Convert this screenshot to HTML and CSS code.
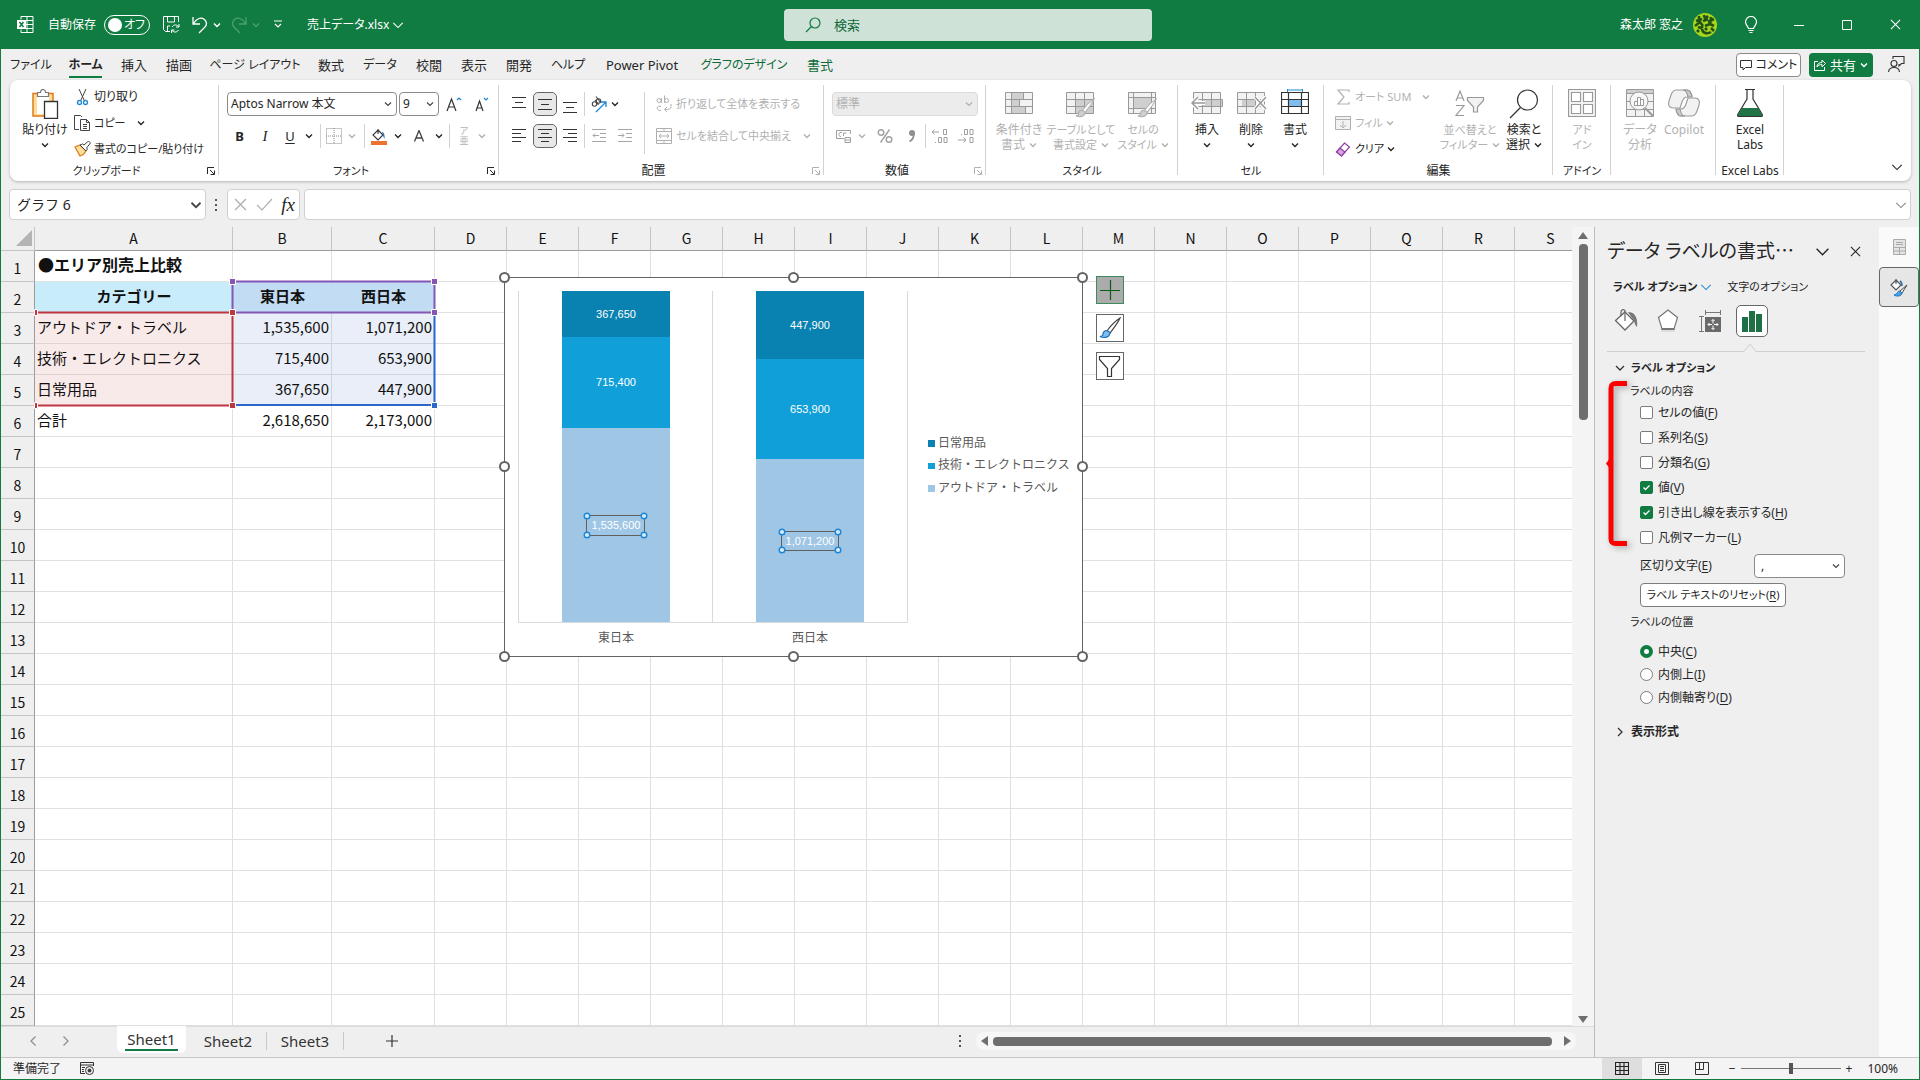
FILE: index.html
```html
<!DOCTYPE html>
<html lang="ja">
<head>
<meta charset="utf-8">
<title>売上データ.xlsx</title>
<link rel="stylesheet" href="styles.css">
</head>
<body>
<svg class="defs" aria-hidden="true">
  <symbol id="chev" viewBox="0 0 8 8"><path d="M1 2.500l3 3 3-3" fill="none" stroke="currentColor" stroke-width="1.400"/></symbol>
  <symbol id="chev-lg" viewBox="0 0 14 14"><path d="M1.500 4.500l5.500 5.500 5.500-5.500" fill="none" stroke="currentColor" stroke-width="1.300"/></symbol>
  <symbol id="cross" viewBox="0 0 12 12"><path d="M1 1l10 10M11 1L1 11" fill="none" stroke="currentColor" stroke-width="1.200"/></symbol>
  <symbol id="launch" viewBox="0 0 8 8"><path d="M.5 7V.5H7M3 3l4 4M7.500 3.500v4h-4" fill="none" stroke="currentColor"/></symbol>
  <symbol id="brush" viewBox="0 0 24 24"><path d="M22 2C16 6 11 12 9 15l3 2C15 13 20 7 22 2z" fill="#fff" stroke="currentColor" stroke-width="1.200"/><path d="M9 14.500c-3 0-4 2-4 4 0 1-1.500 2-3 2 4 2 10 1 10-4z" fill="var(--tip,#cfcfcf)" stroke="var(--tipline,currentColor)" stroke-width="1.200"/></symbol>
</svg>

<header class="titlebar">
  <div class="quick">
    <svg class="applogo" width="17" height="17" viewBox="0 0 17 17" fill="none" stroke="#fff"><path d="M4 3.500V.5h12v16H4v-3M10 .5v16M4.500 4.500H16M9 8.500h7M4.500 12.500H16"/><path d="M0 4h9v9H0z" fill="#fff" stroke="none"/><path d="M2.500 6l4 5M6.500 6l-4 5" stroke="#107c41" stroke-width="1.500"/></svg>
    <label class="autosave" for="autosave">自動保存</label>
    <button class="toggle" id="autosave" type="button"><span class="knob"></span>オフ</button>
    <button class="plain q-save" type="button" aria-label="保存"><svg width="17" height="17" viewBox="0 0 17 17" fill="none" stroke="#fff"><path d="M7 15.500H2.500l-2-2V.5h15V6M4.500.5V6h7V.5M4.500 15v-5H7M16 8v3h-3M8.500 17v-3h3M9 11c2-3 5-2.500 7 0M15.500 14c-2 3-5 2.500-7 0"/></svg></button>
    <button class="plain q-undo" type="button" aria-label="元に戻す"><svg width="16" height="18" viewBox="0 0 16 18" fill="none" stroke="#fff" stroke-width="1.300"><path d="M1 1v7h7M1.500 7.500C5 2 9 1 12.500 3.500c3 3 2 6 0 8L7 17"/></svg><svg class="chev"><use href="#chev"/></svg></button>
    <button class="plain q-redo" type="button" aria-label="やり直し" disabled><svg width="16" height="18" viewBox="0 0 16 18" fill="none" stroke="currentColor" stroke-width="1.300"><path d="M15 1v7H8M14.500 7.500C11 2 7 1 3.500 3.500c-3 3-2 6 0 8L9 17"/></svg><svg class="chev"><use href="#chev"/></svg></button>
    <button class="plain q-custom" type="button" aria-label="カスタマイズ"><svg width="8" height="9" viewBox="0 0 8 9" fill="none" stroke="#fff" stroke-width="1.200"><path d="M0 1h8M1 4l3 3 3-3"/></svg></button>
    <button class="plain filename" type="button">売上データ.xlsx<svg class="chev-m"><use href="#chev-lg"/></svg></button>
  </div>
  <div class="search">
    <svg width="16" height="16" viewBox="0 0 16 16" fill="none" stroke="#107c41" stroke-width="1.200"><circle cx="10" cy="6" r="5"/><path d="M6.500 9.500L1 15"/></svg>
    <input class="search-input" type="text" aria-label="検索" placeholder="検索">
  </div>
  <div class="account">
    <span>森太郎 窓之</span>
    <svg class="avatar" width="24" height="24" viewBox="0 0 24 24"><circle cx="12" cy="12" r="12" fill="#a9d41c"/><path d="M3 8l6-2M6 3v6M2 13l5-4 3 4M11 2l1 4 3-3M10 8l5-2M15 9l6-3M18 4l-1 8M12 13l5-2 4 2M5 14l3 1 2-2M4 17l2 2M9 16c1 5 6 5 9 3M12 15l2 2M18 15l3 3" stroke="#1f5416" stroke-width="2.600" fill="none"/></svg>
    <button class="plain win" type="button" aria-label="ヒント"><svg width="14" height="18" viewBox="0 0 14 18" fill="none" stroke="#fff" stroke-width="1.200"><path d="M4.500 12.500C4 10 1.500 9 1.500 6a5.500 5.500 0 0 1 11 0c0 3-2.500 4-3 6.500zM4.500 14.500h5M5.500 16.500h3"/></svg></button>
    <button class="plain win" type="button" aria-label="最小化"><svg width="10" height="10"><path d="M0 5.500h10" stroke="#fff"/></svg></button>
    <button class="plain win" type="button" aria-label="最大化"><svg width="10" height="10"><path d="M.5.5h9v9h-9z" stroke="#fff" fill="none"/></svg></button>
    <button class="plain win" type="button" aria-label="閉じる"><svg width="11" height="11"><use href="#cross"/></svg></button>
  </div>
</header>

<div class="tabrow">
  <nav class="tabs">
    <a href="#" class="k">ファイル</a><a href="#" class="k active">ホーム</a><a href="#">挿入</a><a href="#">描画</a><a href="#" class="k">ページ レイアウト</a><a href="#">数式</a><a href="#" class="k">データ</a><a href="#">校閲</a><a href="#">表示</a><a href="#">開発</a><a href="#" class="k">ヘルプ</a><a href="#">Power Pivot</a><a href="#" class="k ctx">グラフのデザイン</a><a href="#" class="ctx">書式</a>
  </nav>
  <div class="tabactions">
    <button class="btn-comment" type="button"><svg width="12" height="12" viewBox="0 0 12 12" fill="none" stroke="#333"><path d="M.5 1.500h11v7H5.500L3 11V8.500H.5z"/></svg>コメント</button>
    <button class="btn-share" type="button"><svg width="12" height="13" viewBox="0 0 12 13" fill="none" stroke="#fff"><path d="M4 3.500H.5v9h10V9M3 9c0-3 2-4.500 5-4.500V2l3.500 3.500L8 9V6.500C6 6.500 4 7 3 9z"/></svg>共有<svg class="chev"><use href="#chev"/></svg></button>
    <button class="plain" type="button" aria-label="チャット"><svg width="17" height="17" viewBox="0 0 17 17" fill="none" stroke="#333" stroke-width="1.100"><path d="M5 3V.5h11v7h-2.500L11 10V8"/><circle cx="6" cy="7.500" r="3"/><path d="M.5 16c.5-6 10.500-6 11 0"/></svg></button>
  </div>
</div>

<section class="ribbon">
  <div class="group">
    <div class="gbody clip">
      <button class="big" type="button"><svg width="28" height="30" viewBox="0 0 28 30"><path d="M2 4.500h20V27H2z" fill="#fbdf9a" stroke="#e07b1a" stroke-width="1.500"/><path d="M6 6h12v19H6z" fill="#fff"/><path d="M6.500 7.500V3.500h3c0-4 5-4 5 0h3v4z" fill="#fff" stroke="#777" stroke-width="1.200"/><path d="M13.500 12.500h13v17h-13z" fill="#fff" stroke="#333" stroke-width="1.300"/></svg><span class="lab">貼り付け</span><svg class="chev"><use href="#chev"/></svg></button>
      <div class="smalls">
        <button class="small" type="button"><svg width="17" height="18" viewBox="0 0 17 18" fill="none"><path d="M5 1l5.500 12M12 1L6.500 13" stroke="#444"/><circle cx="5.500" cy="14.500" r="2" stroke="#1e88d2" stroke-width="1.300"/><circle cx="11.500" cy="14.500" r="2" stroke="#1e88d2" stroke-width="1.300"/></svg>切り取り</button>
        <button class="small k" type="button"><svg width="17" height="17" viewBox="0 0 17 17" fill="none" stroke="#444"><path d="M5 14.500H.5V.5h6L8 2M6.500 4.500h6l3 3v8h-9zM12.500 4.500v3h3M9 9.500h4M9 11.500h4M9 13.500h4"/></svg>コピー<svg class="chev gap"><use href="#chev"/></svg></button>
        <button class="small k" type="button"><svg width="17" height="17" viewBox="0 0 17 17"><path d="M1 6l5 9c3-1 5-3 6-5L6 4z" fill="#fbdf9a" stroke="#e07b1a" stroke-width="1.300"/><path d="M6 4l6 6 1.500-2-1-1 4-5-2-2-4.500 4-1.500-1z" fill="#fff" stroke="#444"/></svg>書式のコピー/貼り付け</button>
      </div>
    </div>
    <div class="glabel k"><span>クリップボード</span><button class="plain launch" type="button" aria-label="クリップボードの設定"><svg width="8" height="8"><use href="#launch"/></svg></button></div>
  </div>

  <div class="group">
    <div class="gbody rows">
      <div class="frow">
        <select class="combo font-name" aria-label="フォント"><option>Aptos Narrow 本文</option></select>
        <select class="combo font-size" aria-label="サイズ"><option>9</option></select>
        <button class="ic w26" type="button" aria-label="拡大"><svg width="16" height="16" viewBox="0 0 16 16" fill="none"><path d="M1 15L5.500 3 10 15M2.500 11h6" stroke="#333" stroke-width="1.200"/><path d="M11 4l2-2 2 2" stroke="#1e88d2" stroke-width="1.200"/></svg></button>
        <button class="ic w26" type="button" aria-label="縮小"><svg width="14" height="16" viewBox="0 0 14 16" fill="none"><path d="M1 15L4.500 5 8 15M2 12h5" stroke="#333" stroke-width="1.200"/><path d="M9 2l2 2 2-2" stroke="#1e88d2" stroke-width="1.200"/></svg></button>
      </div>
      <div class="fontgrid">
        <button class="ic" type="button"><b>B</b></button>
        <button class="ic" type="button"><i class="serif">I</i></button>
        <button class="ic" type="button"><u>U</u></button>
        <svg class="chev"><use href="#chev"/></svg>
        <span class="sep"></span>
        <button class="ic" type="button" aria-label="罫線"><svg width="16" height="16" viewBox="0 0 16 16" fill="none" stroke="#8a8a8a"><path d="M.5.500h15v15H.5zM8 0v16M0 8h16" stroke-dasharray="1 1"/></svg></button>
        <svg class="chev dim"><use href="#chev"/></svg>
        <span class="sep"></span>
        <button class="ic" type="button" aria-label="塗りつぶし"><svg width="16" height="17" viewBox="0 0 16 17"><path d="M7 2l5 5-5 5-5-5zM7 6V1" fill="#fff" stroke="#333" stroke-width="1.100"/><path d="M11 4c2 0 3 3 2.500 7-1-1-1-3-1.500-4z" fill="#1e6fb8"/><path d="M0 13h16v4H0z" fill="#ed7330"/></svg></button>
        <svg class="chev"><use href="#chev"/></svg>
        <button class="ic" type="button" aria-label="文字色"><svg width="12" height="12" viewBox="0 0 12 12" fill="none" stroke="#444" stroke-width="1.300"><path d="M1.500 11.500L6 .5l4.500 11M3 8h6"/></svg></button>
        <svg class="chev"><use href="#chev"/></svg>
        <span class="sep"></span>
        <button class="ic ruby" type="button" disabled><span>ア</span><span>亜</span></button>
        <svg class="chev dim"><use href="#chev"/></svg>
      </div>
    </div>
    <div class="glabel k"><span>フォント</span><button class="plain launch" type="button" aria-label="フォントの設定"><svg width="8" height="8"><use href="#launch"/></svg></button></div>
  </div>

  <div class="group">
    <div class="gbody aligns">
      <div class="aligngrid">
        <button class="ic" type="button" aria-label="上揃え"><svg width="14" height="20" viewBox="0 0 14 20"><path d="M0 3.500h14M3 8.500h8M0 13.500h14" stroke="#333"/></svg></button>
        <button class="ic on" type="button" aria-label="上下中央"><svg width="14" height="20" viewBox="0 0 14 20"><path d="M0 5.500h14M3 10.500h8M0 15.500h14" stroke="#333"/></svg></button>
        <button class="ic" type="button" aria-label="下揃え"><svg width="14" height="20" viewBox="0 0 14 20"><path d="M0 8.500h14M3 13.500h8M0 18.500h14" stroke="#333"/></svg></button>
        <span class="sep"></span>
        <button class="ic" type="button" aria-label="方向"><svg width="17" height="17" viewBox="0 0 17 17" fill="none"><g stroke="#444" stroke-width="1.100"><circle cx="3.500" cy="8" r="2.200"/><circle cx="7.500" cy="5" r="2.200"/><path d="M4 4l3.500 5M5 .5l4.500 6"/></g><path d="M5 16L15 6M10 6h5v5" stroke="#1e88d2" stroke-width="1.300"/></svg></button>
        <svg class="chev start"><use href="#chev"/></svg>
        <button class="ic" type="button" aria-label="左揃え"><svg width="14" height="14"><path d="M0 .5h14M0 4.500h9M0 8.500h14M0 12.500h9" stroke="#333"/></svg></button>
        <button class="ic on" type="button" aria-label="中央揃え"><svg width="14" height="14"><path d="M0 .5h14M3 4.500h8M0 8.500h14M3 12.500h8" stroke="#333"/></svg></button>
        <button class="ic" type="button" aria-label="右揃え"><svg width="14" height="14"><path d="M0 .5h14M5 4.500h9M0 8.500h14M5 12.500h9" stroke="#333"/></svg></button>
        <span class="sep"></span>
        <button class="ic" type="button" aria-label="インデント減"><svg width="14" height="14" fill="none" stroke="#a6a6a6"><path d="M0 .5h14M8 4.500h6M8 8.500h6M0 12.500h14M7 6.500H1M3 4.500l-2 2 2 2"/></svg></button>
        <button class="ic" type="button" aria-label="インデント増"><svg width="14" height="14" fill="none" stroke="#a6a6a6"><path d="M0 .5h14M8 4.500h6M8 8.500h6M0 12.500h14M0 6.500h6M4 4.500l2 2-2 2"/></svg></button>
      </div>
      <span class="sep tall"></span>
      <div class="rows">
        <button class="small k dis h24" type="button" disabled><svg width="16" height="18" viewBox="0 0 16 18" fill="none" stroke="currentColor"><circle cx="3" cy="5.500" r="2"/><path d="M5.500 3v5M8.500.5V8"/><circle cx="10.500" cy="5.500" r="2"/><path d="M5 11.500c-5-2-5 5 0 4M15 9v2.500c0 3-3 3-6 3M11 12l-2.500 2.500L11 17"/></svg>折り返して全体を表示する</button>
        <button class="small k dis h24" type="button" disabled><svg width="16" height="16" viewBox="0 0 16 16" fill="none" stroke="currentColor"><path d="M.5.500h15v15H.5zM.5 3.500h15M.5 12.500h15M8 .5v3M8 12.500v3M3 8h10M5 6L3 8l2 2M11 6l2 2-2 2"/></svg>セルを結合して中央揃え<svg class="chev gap"><use href="#chev"/></svg></button>
      </div>
    </div>
    <div class="glabel"><span>配置</span><button class="plain launch dim" type="button" aria-label="配置の設定"><svg width="8" height="8"><use href="#launch"/></svg></button></div>
  </div>

  <div class="group">
    <div class="gbody rows">
      <select class="combo num" aria-label="表示形式" disabled><option>標準</option></select>
      <div class="numgrid">
        <svg width="16" height="14" viewBox="0 0 16 14" fill="none" stroke="#a0a0a0"><path d="M8 9.500H.5v-8h14V5M6 3.500c-4-1-4 4-1 4M7.500 7V4h3M9 8.500h5.500v5H9zM9 11h5.500"/></svg>
        <svg class="chev dim"><use href="#chev"/></svg>
        <svg width="16" height="16" viewBox="0 0 16 16" fill="none" stroke="#a0a0a0" stroke-width="1.400"><circle cx="4" cy="4.500" r="2.800"/><circle cx="12" cy="11.500" r="2.800"/><path d="M12.500 1.500l-9 13"/></svg>
        <svg width="8" height="14" viewBox="0 0 8 14"><circle cx="4" cy="4" r="3" fill="#8f8f8f"/><path d="M6 4c0 5-1.500 7-4.500 8.500" fill="none" stroke="#8f8f8f" stroke-width="1.800"/></svg>
        <span class="sep"></span>
        <svg width="16" height="16" viewBox="0 0 16 16" fill="none" stroke="#a0a0a0"><path d="M0 4h7M2.500 1.500L0 4l2.500 2.500M3 14.500h1"/><path d="M11.500 1.500h3v5h-3zM6.500 9.500h3v5h-3zM12 9.500h3v5h-3z"/></svg>
        <svg width="16" height="16" viewBox="0 0 16 16" fill="none" stroke="#a0a0a0"><path d="M0 12h8M5.500 9.500L8 12l-2.500 2.500M3 6.500h1"/><path d="M6.500 1.500h3v5h-3zM12 1.500h3v5h-3zM12 9.500h3v5h-3z"/></svg>
      </div>
    </div>
    <div class="glabel"><span>数値</span><button class="plain launch dim" type="button" aria-label="数値の設定"><svg width="8" height="8"><use href="#launch"/></svg></button></div>
  </div>

  <div class="group">
    <div class="gbody styles">
      <button class="big dis" type="button" disabled><svg width="28" height="28" viewBox="0 0 28 28"><path d="M.5 3.500h27v21H.5z" fill="#f2f2f2"/><path d="M6 4h12v7H6zM6 11h8v7H6zM6 18h14v6H6z" fill="#cfcfcf"/><path d="M.5 3.500h27v21H.5zM.5 10.500h27M.5 17.500h27M6.500 3.500v21M18.500 3.500v7M14.500 10.500v7M20.500 17.500v7" fill="none" stroke="#999"/></svg><span class="lab">条件付き<br>書式<svg class="chev"><use href="#chev"/></svg></span></button>
      <button class="big dis" type="button" disabled><svg width="30" height="29" viewBox="0 0 30 29"><path d="M.5 3.500h27v21H.5z" fill="#f2f2f2"/><path d="M10 11h17v13H10z" fill="#cfcfcf"/><path d="M.5 3.500h27v21H.5zM.5 10.500h27M.5 17.500h27M9.500 3.500v21M18.500 3.500v21" fill="none" stroke="#999"/><use href="#brush" x="8" y="8" width="22" height="22"/></svg><span class="lab k">テーブルとして<br>書式設定<svg class="chev"><use href="#chev"/></svg></span></button>
      <button class="big dis" type="button" disabled><svg width="30" height="29" viewBox="0 0 30 29"><path d="M.5 3.500h27v21H.5z" fill="#f2f2f2"/><path d="M6 9h17v10H6z" fill="#cfcfcf"/><path d="M.5 3.500h27v21H.5zM.5 8.500h27M.5 19.500h27M5.500 3.500v21M23.500 3.500v21" fill="none" stroke="#999"/><use href="#brush" x="8" y="8" width="22" height="22"/></svg><span class="lab k">セルの<br>スタイル<svg class="chev"><use href="#chev"/></svg></span></button>
    </div>
    <div class="glabel k"><span>スタイル</span></div>
  </div>

  <div class="group">
    <div class="gbody cells">
      <button class="big" type="button"><svg width="32" height="28" viewBox="0 0 32 28"><path d="M2.500 3.500h27v21h-27z" fill="#f2f2f2"/><path d="M12 10h19v7H12z" fill="#cfcfcf"/><path d="M2.500 3.500h27v21h-27zM2.500 10.500h29v7h-29M11.500 3.500v21M20.500 3.500v21" fill="none" stroke="#999"/><path d="M14 14H1M7 8l-6 6 6 6" fill="none" stroke="#fff" stroke-width="4"/><path d="M14 14H1M7 8l-6 6 6 6" fill="none" stroke="#999" stroke-width="1.500"/></svg><span class="lab">挿入</span><svg class="chev"><use href="#chev"/></svg></button>
      <button class="big" type="button"><svg width="32" height="28" viewBox="0 0 32 28"><path d="M2.500 3.500h27v21h-27z" fill="#f2f2f2"/><path d="M7 10h13v7H7z" fill="#cfcfcf"/><path d="M2.500 3.500h27v21h-27zM2.500 10.500h27M2.500 17.500h27M11.500 3.500v21M20.500 3.500v21" fill="none" stroke="#999"/><path d="M20 8l11 12M31 8L20 20" stroke="#fff" stroke-width="4"/><path d="M20 8l11 12M31 8L20 20" stroke="#999" stroke-width="1.500"/></svg><span class="lab">削除</span><svg class="chev"><use href="#chev"/></svg></button>
      <button class="big" type="button"><svg width="28" height="28" viewBox="0 0 28 28"><path d="M.5 3.500h27v21H.5z" fill="#fff"/><path d="M7 10h14v8H7z" fill="#7fbef0"/><path d="M.5 3.500h27v21H.5zM.5 10.500h27M.5 17.500h27M7.500 3.500v21M20.500 3.500v21" fill="none" stroke="#333" stroke-width="1.200"/><path d="M7 1h14M6.500-1v4M21.500-1v4" stroke="#1e88d2"/></svg><span class="lab">書式</span><svg class="chev"><use href="#chev"/></svg></button>
    </div>
    <div class="glabel k"><span>セル</span></div>
  </div>

  <div class="group">
    <div class="gbody edit">
      <div class="smalls">
        <button class="small k dis" type="button" disabled><svg width="17" height="16" viewBox="0 0 17 16" fill="none" stroke="currentColor" stroke-width="1.200"><path d="M14 3V1H3l6 7-6 7h11v-2"/></svg>オート SUM<svg class="chev gap"><use href="#chev"/></svg></button>
        <button class="small k dis" type="button" disabled><svg width="17" height="15" viewBox="0 0 17 15" fill="none" stroke="currentColor"><path d="M.5.500h15v13H.5z" fill="#f2f2f2"/><path d="M.5 3.500h15M8 5v6.500M5 9l3 3 3-3"/></svg>フィル<svg class="chev"><use href="#chev"/></svg></button>
        <button class="small k" type="button"><svg width="17" height="15" viewBox="0 0 17 15" fill="#fff" stroke="#8e3fa0" stroke-width="1.200"><path d="M9.500 1l5 4-8 9-5-4z"/><path d="M5 6l5 4-3.500 4-5-4z" fill="#d8a2e0"/></svg>クリア<svg class="chev"><use href="#chev"/></svg></button>
      </div>
      <button class="big dis sort" type="button" disabled><svg width="30" height="28" viewBox="0 0 30 28" fill="none" stroke="#999" stroke-width="1.200"><path d="M1 12L5 2l4 10M2.500 9h5M1 16.500h8L1 26.500h8"/><path d="M12.500 8.500h16v3L22.500 18v5h-4v-5l-6-6.500z" fill="#f2f2f2"/></svg><span class="lab k">並べ替えと<br>フィルター<svg class="chev"><use href="#chev"/></svg></span></button>
      <button class="big find" type="button"><svg width="30" height="30" viewBox="0 0 30 30" fill="none" stroke="#333" stroke-width="1.200"><circle cx="18.500" cy="11" r="10"/><path d="M11.500 18.500L1 29"/></svg><span class="lab">検索と<br>選択<svg class="chev"><use href="#chev"/></svg></span></button>
    </div>
    <div class="glabel"><span>編集</span></div>
  </div>

  <div class="group">
    <div class="gbody mid">
      <button class="big dis" type="button" disabled><svg width="28" height="28" viewBox="0 0 28 28" fill="#fff" stroke="#999" stroke-width="1.100"><path d="M.5.500h27v27H.5z" fill="#f2f2f2"/><path d="M3.500 3.500h9v9h-9zM15.500 3.500h9v9h-9zM3.500 15.500h9v9h-9zM15.500 15.500h9v9h-9z"/></svg><span class="lab k">アド<br>イン</span></button>
    </div>
    <div class="glabel k"><span>アドイン</span></div>
  </div>

  <div class="group">
    <div class="gbody cells">
      <button class="big dis" type="button" disabled><svg width="28" height="28" viewBox="0 0 28 28" fill="#f2f2f2" stroke="#999"><path d="M.5.500h27v27H.5z"/><path d="M.5 4.500h27M.5 12.500h27M.5 20.500h27M9.500 20v8M18.500 20v8"/><path d="M1 1h26v3H1z" fill="#cfcfcf" stroke="none"/><path d="M19 19l8 8" stroke-width="2"/><circle cx="13" cy="12" r="9" fill="#f7f7f7"/><path d="M8.500 12.500h3v4h-3zM11.500 8.500h3v8h-3zM14.500 10.500h3v6h-3z" fill="#fff"/></svg><span class="lab">データ<br>分析</span></button>
      <button class="big dis" type="button" disabled><svg width="32" height="28" viewBox="0 0 32 28" fill="#f2f2f2" stroke="#999" stroke-width="1.100"><path d="M8 1h11c3 0 4 2 5 6l-5 1c-3 0-4 2-5 5l-2 6H5c-4 0-5-3-4-7C3 6 4 1 8 1z"/><path d="M24 27H13c-3 0-4-2-5-6l5-1c3 0 4-2 5-5l2-6h7c4 0 5 3 4 7-2 6-3 11-7 11z"/><path d="M15 1c3 0 4 2 5 7h4c-1-5-2-7-5-7zM17 27c-3 0-4-2-5-7H8c1 5 2 7 5 7z" fill="#c9c9c9"/></svg><span class="lab">Copilot</span></button>
    </div>
    <div class="glabel"></div>
  </div>

  <div class="group">
    <div class="gbody mid">
      <button class="big" type="button"><svg width="26" height="28" viewBox="0 0 26 28"><path d="M8 .5h10M10 1v9L1 25c-1 2 0 2.500 1 2.500h22c1 0 2-.5 1-2.500L16 10V1" fill="#fff" stroke="#333" stroke-width="1.200"/><path d="M5 19h16l4 6.500c.5 1 0 1.500-1 1.500H2c-1 0-1.500-.5-1-1.500z" fill="#227447"/></svg><span class="lab">Excel<br>Labs</span></button>
    </div>
    <div class="glabel"><span>Excel Labs</span></div>
  </div>

  <div class="group last"><button class="plain" type="button" aria-label="リボンを折りたたむ"><svg class="chev-m"><use href="#chev-lg"/></svg></button></div>
</section>

<div class="formulabar">
  <select class="namebox" aria-label="名前ボックス"><option>グラフ 6</option></select>
  <svg class="dots" width="3" height="12"><path d="M0 0h2v2H0zM0 5h2v2H0zM0 10h2v2H0z" fill="#555"/></svg>
  <div class="fxbox">
    <svg width="13" height="13" viewBox="0 0 12 12" class="dim"><use href="#cross"/></svg>
    <svg width="17" height="13" viewBox="0 0 17 13" fill="none" stroke="#b0b0b0" stroke-width="1.200"><path d="M1 7l5 5L16 1"/></svg>
    <i>fx</i>
  </div>
  <div class="formula"><input class="finput" type="text" aria-label="数式"><svg class="chev-m dim2"><use href="#chev-lg"/></svg></div>
</div>

<main class="main">
  <div class="work">
    <div class="sheetrow">
      <div class="sheet">
        <table class="cells-table" id="grid">
          <colgroup><col class="c-head"><col class="c-a"><col class="c-b"><col class="c-c"></colgroup>
          <thead><tr><th class="corner"><svg width="16" height="16"><path d="M16 0v16H0z" fill="#b4b4b4"/></svg></th></tr></thead>
          <tbody>
            <tr><th>1</th><td class="title">●エリア別売上比較</td></tr>
            <tr><th>2</th><td class="hd cat">カテゴリー</td><td class="hd area">東日本</td><td class="hd area">西日本</td></tr>
            <tr><th>3</th><td class="pink">アウトドア・トラベル</td><td class="n sel">1,535,600</td><td class="n sel">1,071,200</td></tr>
            <tr><th>4</th><td class="pink">技術・エレクトロニクス</td><td class="n sel">715,400</td><td class="n sel">653,900</td></tr>
            <tr><th>5</th><td class="pink">日常用品</td><td class="n sel">367,650</td><td class="n sel">447,900</td></tr>
            <tr><th>6</th><td>合計</td><td class="n">2,618,650</td><td class="n">2,173,000</td></tr>
          </tbody>
        </table>

        <svg class="ranges" width="420" height="140" viewBox="30 275 420 140" fill="none" stroke-width="2">
          <path d="M434.500 313v92H233" stroke="#2b67c9"/>
          <path d="M36 312.500h196.500v93H36" stroke="#be3640"/>
          <path d="M232.500 281.500h202v31h-202z" stroke="#8457b5"/>
          <g stroke="#fff" stroke-width="1">
            <path d="M34.500 309.500h3v6h-3zM34.500 402.500h3v6h-3zM229.500 309.500h6v6h-6zM229.500 402.500h6v6h-6z" fill="#be3640"/>
            <path d="M229.500 278.500h6v6h-6zM431.500 278.500h6v6h-6zM431.500 309.500h6v6h-6z" fill="#8457b5"/>
            <path d="M431.500 402.500h6v6h-6z" fill="#2b67c9"/>
          </g>
        </svg>

        <svg class="chart" width="600" height="400" viewBox="495 268 600 400">
          <path d="M504.500 277.500h578v379h-578z" fill="#fff" stroke="#636363"/>
          <path d="M518.500 291v331.500h389V291M712.500 291v331" fill="none" stroke="#d9d9d9"/>
          <path d="M562 291h108v46H562zM756 291h108v68H756z" fill="#0a82b1"/>
          <path d="M562 337h108v91H562zM756 359h108v100H756z" fill="#109fd8"/>
          <path d="M562 428h108v194H562zM756 459h108v163H756z" fill="#a0c6e6"/>
          <path d="M586.500 515.500h58v20h-58zM781.500 531.500h57v19h-57z" fill="none" stroke="#606060"/>
          <g fill="#d5ebfa" stroke="#1b86d8" stroke-width="1.400"><circle cx="587" cy="516" r="2.800"/><circle cx="644" cy="516" r="2.800"/><circle cx="587" cy="535" r="2.800"/><circle cx="644" cy="535" r="2.800"/><circle cx="782" cy="532" r="2.800"/><circle cx="838" cy="532" r="2.800"/><circle cx="782" cy="550" r="2.800"/><circle cx="838" cy="550" r="2.800"/></g>
          <g class="vals"><text x="616" y="318">367,650</text><text x="616" y="386">715,400</text><text x="616" y="529">1,535,600</text><text x="810" y="329">447,900</text><text x="810" y="413">653,900</text><text x="810" y="545">1,071,200</text></g>
          <g class="axis"><text x="616" y="642">東日本</text><text x="810" y="642">西日本</text></g>
          <path d="M928 440h7v7h-7z" fill="#0a82b1"/><path d="M928 463h7v6h-7z" fill="#109fd8"/><path d="M928 485h7v7h-7z" fill="#a0c6e6"/>
          <g class="legend"><text x="938" y="447">日常用品</text><text x="938" y="469">技術・エレクトロニクス</text><text x="938" y="492">アウトドア・トラベル</text></g>
          <g fill="#fff" stroke="#636363" stroke-width="2"><circle cx="504.500" cy="277.500" r="4.500"/><circle cx="793.500" cy="277.500" r="4.500"/><circle cx="1082.500" cy="277.500" r="4.500"/><circle cx="504.500" cy="466.500" r="4.500"/><circle cx="1082.500" cy="466.500" r="4.500"/><circle cx="504.500" cy="656.500" r="4.500"/><circle cx="793.500" cy="656.500" r="4.500"/><circle cx="1082.500" cy="656.500" r="4.500"/></g>
        </svg>

        <div class="charttools">
          <button class="ct plus" type="button" aria-label="グラフ要素"><svg width="22" height="22"><path d="M11.500 1v20M1 11.500h20" stroke="#0a5e15" stroke-width="1.200"/></svg></button>
          <button class="ct" type="button" aria-label="グラフスタイル"><svg class="blue" width="24" height="24"><use href="#brush"/></svg></button>
          <button class="ct" type="button" aria-label="グラフフィルター"><svg width="24" height="24" viewBox="0 0 24 24"><path d="M1.500 2.500h20v3l-8 9v8h-4v-8l-8-9z" fill="#fff" stroke="#333" stroke-width="1.200"/></svg></button>
        </div>
      </div>
      <div class="vscroll">
        <svg width="10" height="7"><path d="M5 0l5 7H0z" fill="#6e6e6e"/></svg>
        <span class="vthumb"></span>
        <svg class="down" width="10" height="7"><path d="M5 7l5-7H0z" fill="#6e6e6e"/></svg>
      </div>
    </div>
    <div class="sheettabs">
      <button class="plain arrow" type="button" aria-label="前へ"><svg width="6" height="10" fill="none" stroke="#909090" stroke-width="1.300"><path d="M5.500.500L1 5l4.500 4.500"/></svg></button>
      <button class="plain arrow" type="button" aria-label="次へ"><svg width="6" height="10" fill="none" stroke="#909090" stroke-width="1.300"><path d="M.5.500L5 5 .5 9.500"/></svg></button>
      <button class="stab active" type="button"><span>Sheet1</span></button>
      <button class="stab" type="button">Sheet2</button>
      <button class="stab" type="button">Sheet3</button>
      <button class="plain add" type="button" aria-label="新しいシート"><svg width="12" height="12"><path d="M6 0v12M0 6h12" stroke="#333" stroke-width="1.200"/></svg></button>
      <svg class="tabdots" width="3" height="12"><path d="M0 0h2v2H0zM0 5h2v2H0zM0 10h2v2H0z" fill="#555"/></svg>
      <div class="hscroll"><svg width="8" height="10"><path d="M0 5l7-5v10z" fill="#6e6e6e"/></svg><span class="hthumb"></span><svg width="8" height="10"><path d="M8 5L1 0v10z" fill="#6e6e6e"/></svg></div>
    </div>
  </div>

  <aside class="pane">
    <div class="pane-head"><h2>データ ラベルの書式⋯</h2><button class="plain" type="button" aria-label="オプション"><svg width="15" height="15"><use href="#chev-lg"/></svg></button><button class="plain" type="button" aria-label="閉じる"><svg width="11" height="11"><use href="#cross"/></svg></button></div>
    <div class="pane-tabs k"><a href="#" class="cur">ラベル オプション</a><svg class="bluechev" width="12" height="12"><use href="#chev-lg"/></svg><a href="#">文字のオプション</a></div>
    <div class="pane-icons">
      <button class="pi" type="button" aria-label="塗りつぶしと線"><svg width="25" height="24" viewBox="0 0 25 24"><path d="M11 3l9 9-9 9-9.500-9.500z" fill="#fff" stroke="#666" stroke-width="1.300"/><path d="M11 12V2c0-2-4-2-4 1v4" fill="none" stroke="#666" stroke-width="1.200"/><path d="M14 3c7 0 10 6 9 15-3-2-2-7-5-9z" fill="#777"/></svg></button>
      <button class="pi" type="button" aria-label="効果"><svg width="22" height="24" viewBox="0 0 22 24"><path d="M11 1l9.500 7.500L17 20H5L1.500 8.500z" fill="#fff" stroke="#777" stroke-width="1.200"/><path d="M4.500 20h13l.5 3H4z" fill="#dcdcdc"/><path d="M4.500 20h13" stroke="#777" stroke-width="2"/></svg></button>
      <button class="pi" type="button" aria-label="サイズとプロパティ"><svg width="22" height="24" viewBox="0 0 22 24"><path d="M6 8h16v15H6z" fill="#6a6a6a"/><path d="M7 3.500h14M6.500 1v5M21.500 1v5M2.500 8v15M0 7.500h5M0 22.500h5" stroke="#777"/><path d="M14 10.500v10M9 15.500h10" stroke="#fff" stroke-dasharray="4 2"/><path d="M12.500 12l1.500-1.500 1.500 1.500M12.500 19l1.500 1.500 1.500-1.500M10.500 14L9 15.500l1.500 1.500M17.500 14l1.500 1.500-1.500 1.500" fill="none" stroke="#fff"/></svg></button>
      <button class="pi on" type="button" aria-label="ラベル オプション"><svg width="20" height="21"><path d="M0 6h6v15H0zM7 0h6v21H7zM14 3h6v18h-6z" fill="#1f7145"/></svg></button>
    </div>
    <svg class="pane-line" width="258" height="9" fill="none" stroke="#cfcfcf"><path d="M0 8.500h137l6-7.500 6 7.500h109"/></svg>
    <button class="sec k" type="button"><svg width="10" height="10" viewBox="0 0 10 10"><path d="M1 3l4 4 4-4" fill="none" stroke="#333" stroke-width="1.300"/></svg>ラベル オプション</button>
    <fieldset class="opts">
      <legend class="k">ラベルの内容</legend>
      <label><input type="checkbox"><span>セルの値(<u>F</u>)</span></label>
      <label><input type="checkbox"><span>系列名(<u>S</u>)</span></label>
      <label><input type="checkbox"><span>分類名(<u>G</u>)</span></label>
      <label><input type="checkbox" checked><span>値(<u>V</u>)</span></label>
      <label><input type="checkbox" checked><span>引き出し線を表示する(<u>H</u>)</span></label>
      <label><input type="checkbox"><span>凡例マーカー(<u>L</u>)</span></label>
    </fieldset>
    <div class="seprow"><label for="sepsel">区切り文字(<u>E</u>)</label><select id="sepsel"><option>,</option></select></div>
    <button class="reset k" type="button">ラベル テキストのリセット(<u>R</u>)</button>
    <fieldset class="opts pos">
      <legend class="k">ラベルの位置</legend>
      <label><input type="radio" name="pos" checked><span>中央(<u>C</u>)</span></label>
      <label><input type="radio" name="pos"><span>内側上(<u>I</u>)</span></label>
      <label><input type="radio" name="pos"><span>内側軸寄り(<u>D</u>)</span></label>
    </fieldset>
    <button class="sec closed" type="button"><svg width="10" height="10"><path d="M3 1l4 4-4 4" fill="none" stroke="#333" stroke-width="1.300"/></svg>表示形式</button>
    <svg class="bracket" width="24" height="170" viewBox="0 0 24 170" fill="none"><path d="M22 4.500H11c-4 0-5 1-5 5v150c0 4 1 5 5 5h11" stroke="#fe0000" stroke-width="5"/><path d="M6 78l-5 6.500L6 91z" fill="#fe0000"/></svg>
  </aside>

  <div class="rail">
    <button class="railbtn" type="button" aria-label="フィールド"><svg width="13" height="16" viewBox="0 0 13 16" fill="none" stroke="#aaa"><path d="M.5.500h12v15H.5z" fill="#e4e4e4"/><path d="M3 3.500h7M3 5.500h7M.5 8.500h12M6.500 8.500v7M.5 12h12"/></svg></button>
    <button class="railbtn on" type="button" aria-label="書式設定"><svg width="18" height="19" viewBox="0 0 18 19"><path d="M6 2l5 5-5 5-5-5zM6 6V1" fill="#fff" stroke="#555" stroke-width="1.200"/><path d="M10 3c2 1 2 3 2 5" stroke="#2a6fb0" stroke-width="1.500" fill="none"/><path d="M17 7l-7 6 2 2z" fill="#fff" stroke="#444"/><path d="M10 13c-3 0-2 3-6 4 3 2 8 1 8-2z" fill="#4aa3e8" stroke="#1b6fb8"/></svg></button>
  </div>
</main>

<footer class="status">
  <span>準備完了</span>
  <svg width="15" height="13" viewBox="0 0 15 13" fill="none" stroke="#333"><path d="M5 11.500H.5V.5h13V4M.5 3h13M2 5.500h3M2 7.500h2M2 9.500h2"/><circle cx="9.500" cy="8.500" r="4"/><circle cx="9.500" cy="8.500" r="1.500" fill="#333"/></svg>
  <div class="views">
    <button class="view on" type="button" aria-label="標準"><svg width="14" height="13"><path d="M.5.500h13v12H.5zM.5 4.500h13M.5 8.500h13M5 .5v12M9 .5v12" fill="none" stroke="#222" stroke-width="1.100"/></svg></button>
    <button class="view" type="button" aria-label="ページ レイアウト"><svg width="14" height="13"><path d="M.5.500h13v12H.5zM3.500 2.500h7v8h-7zM5 4.500h4M5 6.500h4M5 8.500h4" fill="none" stroke="#333"/></svg></button>
    <button class="view" type="button" aria-label="改ページ"><svg width="14" height="13"><path d="M.5.500h13v12H.5zM4.500.500v7M8.500.500v7h-8" fill="none" stroke="#333"/></svg></button>
  </div>
  <div class="zoom"><span>−</span><input type="range" aria-label="ズーム" value="50"><span>+</span></div>
  <span class="pct">100%</span>
</footer>
<script src="script.js"></script>
</body>
</html>
```
FILE: styles.css
```css
* { box-sizing: border-box; }
body {
  margin: 0;
  min-height: 100vh;
  display: flex;
  flex-direction: column;
  background: #efefef;
  border: solid #107c41;
  border-width: 0 1px 1px;
  color: #262626;
  font: 12px/16px "Noto Sans", "Noto Sans CJK JP", sans-serif;
  font-feature-settings: "palt";
  overflow: hidden;
}
button, input, select { font: inherit; font-feature-settings: inherit; color: inherit; margin: 0; }
button { border: 0; background: none; padding: 0; white-space: nowrap; }
svg { display: block; flex: none; }
a { color: inherit; text-decoration: none; white-space: nowrap; }
u { text-underline-offset: 2px; }
.k { font-size: 11px; }
.defs { position: absolute; width: 0; height: 0; }
.chev { width: 8px; height: 8px; }
.chev-m { width: 12px; height: 12px; }
.dim { color: #b0b0b0; }
.dim2 { color: #888; }
.plain { display: flex; align-items: center; justify-content: center; }

/* title bar */
.titlebar {
  height: 49px;
  background: #107c41;
  color: #fff;
  display: grid;
  grid-template-columns: minmax(0, 1fr) 368px minmax(0, 1fr);
  align-items: center;
  padding-left: 16px;
}
.quick, .account { display: flex; align-items: center; white-space: nowrap; }
.autosave { margin-left: 14px; }
.toggle {
  width: 46px; height: 20px; margin-left: 8px; padding: 0 4px 0 3px;
  border: 1px solid #fff; border-radius: 10px;
  display: flex; align-items: center; justify-content: space-between;
}
.knob { width: 14px; height: 14px; border-radius: 50%; background: #fff; }
.q-save { margin-left: 13px; }
.q-undo { margin-left: 12px; gap: 5px; }
.q-redo { margin-left: 10px; gap: 5px; color: #4d9f70; }
.q-custom { margin-left: 14px; }
.filename { margin-left: 25px; gap: 3px; }
.search {
  height: 32px; background: #cfe2d8; border-radius: 4px;
  display: flex; align-items: center; gap: 13px; padding-left: 21px;
}
.search-input { flex: 1; min-width: 0; border: 0; background: none; padding: 0; outline: 0; font-size: 13px; }
.search-input::placeholder { color: #10683a; opacity: 1; }
.account { justify-content: flex-end; }
.avatar { margin: 0 10px 0 10px; }
.win { width: 48px; height: 40px; }

/* tab row */
.tabrow { height: 31px; display: flex; align-items: center; justify-content: space-between; padding: 0 14px 0 11px; }
.tabs {
  display: grid; font-size: 13px; line-height: 18px;
  grid-template-columns: 38px 33px 26px 26px 88px 26px 34px 26px 26px 26px 34px 76px 90px 24px;
  column-gap: 19px;
  padding-top: 4px;
}
.tabs a { display: flex; justify-content: center; height: 22px; }
.tabs .k { font-size: 12px; }
.tabs .active { font-weight: 700; border-bottom: 2px solid #107c41; }
.tabs .ctx { color: #0e6b37; }
.tabactions { display: flex; align-items: center; gap: 8px; font-size: 12px; }
.tabactions .plain { margin-left: 7px; }
.btn-comment, .btn-share { display: flex; align-items: center; justify-content: center; gap: 4px; height: 24px; border-radius: 4px; }
.btn-comment { width: 65px; background: #fff; border: 1px solid #8a8a8a; }
.btn-share { width: 64px; background: #107c41; color: #fff; font-size: 13px; }

/* ribbon */
.ribbon {
  margin: 0 8px 0 9px;
  height: 101px;
  background: #fff;
  border-radius: 8px;
  box-shadow: 0 1px 3px #00000040;
  display: grid;
  grid-template-columns: 209px 280px 325px 162px 192px 146px 229px 58px 105px 68px 1fr;
}
.group { display: flex; flex-direction: column; min-width: 0; }
.group:not(.last) { background: linear-gradient(#d2d2d2, #d2d2d2) right 5px / 1px 90px no-repeat; }
.group.last { align-items: flex-end; justify-content: flex-end; padding: 0 8px 8px 0; }
.gbody { height: 81px; display: flex; align-items: flex-start; }
.glabel { height: 20px; display: flex; align-items: center; white-space: nowrap; }
.glabel span { flex: 1; text-align: center; }
.launch { width: 16px; }
.clip { padding-left: 9px; }
.clip .big { width: 52px; }
.big { display: flex; flex-direction: column; align-items: center; padding-top: 9px; height: 72px; }
.big > svg:first-child { margin-bottom: auto; }
.big .lab { line-height: 15px; text-align: center; height: 15px; }
.big .lab:not(:last-child) + .chev { margin: 4px 0 3px; }
.big .lab:last-child { height: 30px; }
.lab .chev { display: inline-block; margin-left: 4px; }
.dis { color: #b1b1b1; }
.smalls { padding-top: 4px; display: flex; flex-direction: column; flex: none; }
.clip .smalls { padding-left: 3px; }
.small { display: flex; align-items: center; gap: 3px; height: 26px; flex: none; }
.small .gap { margin-left: 8px; }
.small.h24 { height: 24px; gap: 4px; }
.rows { display: flex; flex-direction: column; gap: 8px; padding: 12px 0 0 8px; }
.frow { display: flex; gap: 2px; }
.combo, .namebox, .seprow select {
  appearance: none; border: 1px solid #8a8a8a; border-radius: 4px; background: #fff no-repeat right 4px center / 8px 8px;
  background-image: url("data:image/svg+xml,%3Csvg xmlns='http://www.w3.org/2000/svg' viewBox='0 0 8 8'%3E%3Cpath d='M1 2.500l3 3 3-3' fill='none' stroke='%23444' stroke-width='1.200'/%3E%3C/svg%3E");
  height: 24px; padding: 0 3px; outline: 0;
}
.font-name { width: 170px; }
.font-size { width: 40px; }
.combo.num { width: 146px; background-color: #ececec; border-color: #dadada; color: #b1b1b1; opacity: 1; background-image: url("data:image/svg+xml,%3Csvg xmlns='http://www.w3.org/2000/svg' viewBox='0 0 8 8'%3E%3Cpath d='M1 2.500l3 3 3-3' fill='none' stroke='%23b0b0b0' stroke-width='1.200'/%3E%3C/svg%3E"); }
.ic { height: 24px; display: flex; align-items: center; justify-content: center; font-size: 13px; }
.ic.w26 { width: 26px; }
.ic.on { width: 24px; background: #e8e8e8; border: 1px solid #666; border-radius: 5px; }
.serif { font-family: "Liberation Serif", serif; font-size: 15px; }
.ruby { flex-direction: column; font-size: 9px; line-height: 10px; color: #b1b1b1; }
.fontgrid, .numgrid, .aligngrid { display: grid; align-items: center; justify-items: center; }
.fontgrid { grid-template-columns: 25px 26px 24px 14px 8px 20px 16px 8px 22px 15px 28px 12px 8px 22px 14px; justify-content: start; }
.numgrid { grid-template-columns: 24px 12px 34px 19px 8px 22px 30px; height: 24px; justify-content: start; }
.aligngrid { grid-template-columns: 26px 26px 24px 5px 24px 27px; row-gap: 8px; align-content: start; padding-top: 12px; }
.aligngrid .start { justify-self: start; }
.aligns { padding-left: 7px; }
.aligns .rows { padding-left: 11px; }
.sep { width: 1px; height: 24px; background: #d2d2d2; }
.sep.tall { height: 62px; margin: 12px 0 0 6px; }
.styles { padding-left: 2px; }
.styles .big { width: 62px; }
.cells { padding-left: 7px; }
.cells .big { width: 44px; }
.edit { padding-left: 11px; }
.edit .smalls { width: 105px; }
.edit .sort { width: 60px; }
.edit .find { width: 48px; }
.mid { justify-content: center; }

/* formula bar */
.formulabar { display: flex; margin: 8px 8px 0 8px; height: 31px; align-items: center; }
.namebox { width: 197px; height: 31px; border-color: #d0d0d0; padding-left: 7px; font-size: 14px; background-size: 12px 12px; background-position: right 3px center; font-feature-settings: normal; }
.dots { margin: 0 9px; }
.fxbox { width: 73px; height: 31px; margin-right: 4px; border: 1px solid #d0d0d0; border-radius: 4px; background: #fff; display: flex; align-items: center; justify-content: space-between; padding: 0 4px 0 6px; }
.fxbox i { font: italic 19px/24px "Liberation Serif", serif; }
.formula { flex: 1; height: 31px; border: 1px solid #d0d0d0; border-radius: 4px; background: #fff; display: flex; align-items: center; padding-right: 3px; }
.finput { flex: 1; min-width: 0; border: 0; outline: 0; background: none; }

/* main area */
.main { flex: 1; display: flex; min-height: 0; }
.work { flex: 1; min-width: 0; display: flex; flex-direction: column; }
.sheetrow { flex: 1; display: flex; min-height: 0; padding-top: 7px; }
.sheet { flex: 1; min-width: 0; position: relative; overflow: hidden; font-family: "Noto Sans CJK JP", sans-serif; }
.cells-table {
  table-layout: fixed; border-spacing: 0; width: 1586px;
  font-size: 15px; line-height: 20px; font-feature-settings: normal; color: #111;
}
.cells-table col { width: 72px; }
.cells-table col.c-head { width: 34px; }
.cells-table col.c-a { width: 198px; }
.cells-table col.c-b { width: 99px; }
.cells-table col.c-c { width: 103px; }
.cells-table th { font-weight: 400; padding: 0; background: #efefef; border: solid #c4c4c4; border-width: 0 1px 1px 0; overflow: hidden; }
.cells-table thead th { height: 24px; padding-bottom: 2px; border-bottom-color: #9c9c9c; font-size: 14px; }
.cells-table thead th.corner { border-bottom-color: #c4c4c4; border-right-color: #c4c4c4; }
.corner svg { margin: 0 2px 0 auto; }
.cells-table tbody th { border-right-color: #9c9c9c; padding-top: 4px; font-size: 14px; }
.cells-table td { height: 31px; padding: 0 2px 2px; background: #fff; border: solid #e0e0e0; border-width: 0 1px 1px 0; white-space: nowrap; }
.cells-table .title { font-size: 16px; font-weight: 700; padding: 0 3px 5px; }
.cells-table .hd { font-weight: 700; text-align: center; border: 0; padding-bottom: 3px; }
.cells-table .cat { background: #c9ecfb; }
.cells-table .area { background: #c1dcf3; }
.cells-table .n { text-align: right; }
.cells-table .pink { background: #f9eaea; border-color: #e0d3d3; }
.cells-table .sel { background: #e9eef8; border-color: #ced3dd; }
.ranges { position: absolute; left: 29px; top: 48px; }
.chart { position: absolute; left: 494px; top: 41px; }
.chart text { font-feature-settings: normal; }
.vals text { font-size: 11px; fill: #fff; text-anchor: middle; font-family: "Liberation Sans", sans-serif; }
.axis text { font-size: 12px; fill: #595959; text-anchor: middle; }
.legend text { font-size: 12px; fill: #595959; }
.charttools { position: absolute; left: 1095px; top: 49px; display: flex; flex-direction: column; gap: 10px; }
.ct { width: 28px; height: 28px; border: 1px solid #666; background: #fff; display: flex; align-items: center; justify-content: center; color: #444; }
.ct.plus { background: #ababab; border-color: #3f8a5e; }
.blue { --tip: #7fbef0; --tipline: #1b6fb8; }
.vscroll { width: 22px; padding: 5px 0 3px; background: #f4f4f4; display: flex; flex-direction: column; align-items: center; gap: 5px; }
.vthumb { width: 9px; height: 176px; border-radius: 4px; background: #6e6e6e; }
.down { margin-top: auto; }

.sheettabs { height: 31px; display: flex; align-items: center; padding: 0 18px 2px 15px; font-size: 15px; border-top: 1px solid #dcdcdc; color: #333; }
.arrow { width: 33px; }
.stab { width: 77px; height: 18px; line-height: 18px; border-right: 1px solid #c8c8c8; }
.stab.active { width: 69px; height: 28px; margin: -2px 4px 0 35px; align-self: flex-start; background: #fff; border: 0; border-radius: 0 0 6px 6px; }
.stab.active span { border-bottom: 2px solid #107c41; padding: 0 2px; }
.add { width: 95px; }
.tabdots { margin-left: auto; margin-right: 14px; }
.hscroll { width: 600px; height: 18px; border-radius: 8px; background: #f6f6f6; display: flex; align-items: center; gap: 4px; padding: 0 5px; }
.hthumb { flex: 1; height: 9px; border-radius: 4px; background: #6e6e6e; margin-right: 7px; }

/* task pane */
.pane { width: 285px; flex: none; position: relative; border-left: 1px solid #bdbdbd; padding: 10px 13px 0 12px; margin: 7px 0 0; display: flex; flex-direction: column; align-items: flex-start; }
.pane-head { display: flex; align-items: center; width: 100%; gap: 20px; height: 28px; padding-right: 5px; }
.pane-head h2 { margin: 0; flex: 1; min-width: 0; font-size: 19px; line-height: 28px; font-weight: 400; white-space: nowrap; }
.pane-tabs { display: flex; align-items: center; margin: 13px 0 0 6px; height: 18px; }
.pane-tabs .cur { font-weight: 700; }
.pane-tabs .bluechev { color: #2a8ad4; margin: 0 15px 0 3px; }
.pane-icons { display: flex; gap: 10px; margin: 9px 0 0 3px; }
.pi { width: 32px; height: 32px; display: flex; align-items: center; justify-content: center; }
.pi.on { background: #fff; border: 1px solid #666; border-radius: 5px; }
.pane-line { margin-top: 6px; }
.sec { display: flex; align-items: center; gap: 6px; margin: 7px 0 0 8px; height: 18px; font-weight: 700; }
.opts { border: 0; margin: 5px 0 0 23px; padding: 0; display: flex; flex-direction: column; }
.opts legend { padding: 0; height: 18px; line-height: 18px; }
.opts label { display: flex; align-items: center; gap: 5px; height: 25px; padding-left: 10px; }
.opts input { appearance: none; width: 13px; height: 13px; margin: 0; border: 1px solid #7c7c7c; border-radius: 2px; background: #fff; }
.opts input[type="checkbox"]:checked {
  border-color: #107c41;
  background: #107c41 url("data:image/svg+xml,%3Csvg xmlns='http://www.w3.org/2000/svg' viewBox='0 0 11 11'%3E%3Cpath d='M2.500 5.500l2 2 4-4' fill='none' stroke='white' stroke-width='1.300'/%3E%3C/svg%3E");
}
.opts input[type="radio"] { border-radius: 50%; }
.opts input[type="radio"]:checked { border: 4px solid #107c41; }
.opts.pos { margin-top: 6px; }
.opts.pos legend { height: 27px; }
.opts.pos label { height: 23px; }
.seprow { display: flex; align-items: center; justify-content: space-between; width: 205px; margin: 4px 0 0 33px; height: 24px; }
.seprow select { width: 91px; padding-left: 6px; }
.reset { margin: 5px 0 0 33px; height: 24px; width: 146px; border: 1px solid #7c7c7c; border-radius: 4px; background: #fff; }
.sec.closed { margin-top: 14px; }
.bracket { position: absolute; left: 10px; top: 152px; filter: drop-shadow(3px 2px 3px #00000050); }
.rail { width: 40px; background: #fafafa; margin-top: 7px; flex: none; display: flex; flex-direction: column; }
.railbtn { height: 40px; display: flex; align-items: center; justify-content: center; }
.railbtn.on { border: 1px solid #666; border-radius: 4px; background: #e6e6e6; }

/* status bar */
.status { height: 22px; border-top: 1px solid #c6c6c6; background: #f4f4f4; display: flex; align-items: center; padding: 0 21px 0 12px; gap: 19px; }
.views { margin-left: auto; display: flex; }
.view { width: 40px; height: 21px; display: flex; align-items: center; justify-content: center; }
.view.on { background: #dedede; }
.zoom { display: flex; align-items: center; gap: 5px; margin-left: -12px; }
.zoom input { appearance: none; width: 100px; height: 12px; background: linear-gradient(#777, #777) center / 100% 1px no-repeat; }
.zoom input::-webkit-slider-thumb { appearance: none; width: 4px; height: 11px; background: #555; }
.pct { margin-left: -4px; }
```
FILE: script.js
```js
const columns = "ABCDEFGHIJKLMNOPQRS".split("");
const grid = document.getElementById("grid");
const colgroup = grid.querySelector("colgroup");
const body = grid.tBodies[0];

while (colgroup.children.length <= columns.length) {
  colgroup.append(document.createElement("col"));
}
for (const name of columns) {
  const th = document.createElement("th");
  th.textContent = name;
  grid.tHead.rows[0].append(th);
}
for (let r = 1; r <= 25; r++) {
  const row = body.rows[r - 1] || body.insertRow();
  if (!row.cells.length) {
    const th = document.createElement("th");
    th.textContent = r;
    row.append(th);
  }
  while (row.cells.length <= columns.length) row.insertCell();
}
```
